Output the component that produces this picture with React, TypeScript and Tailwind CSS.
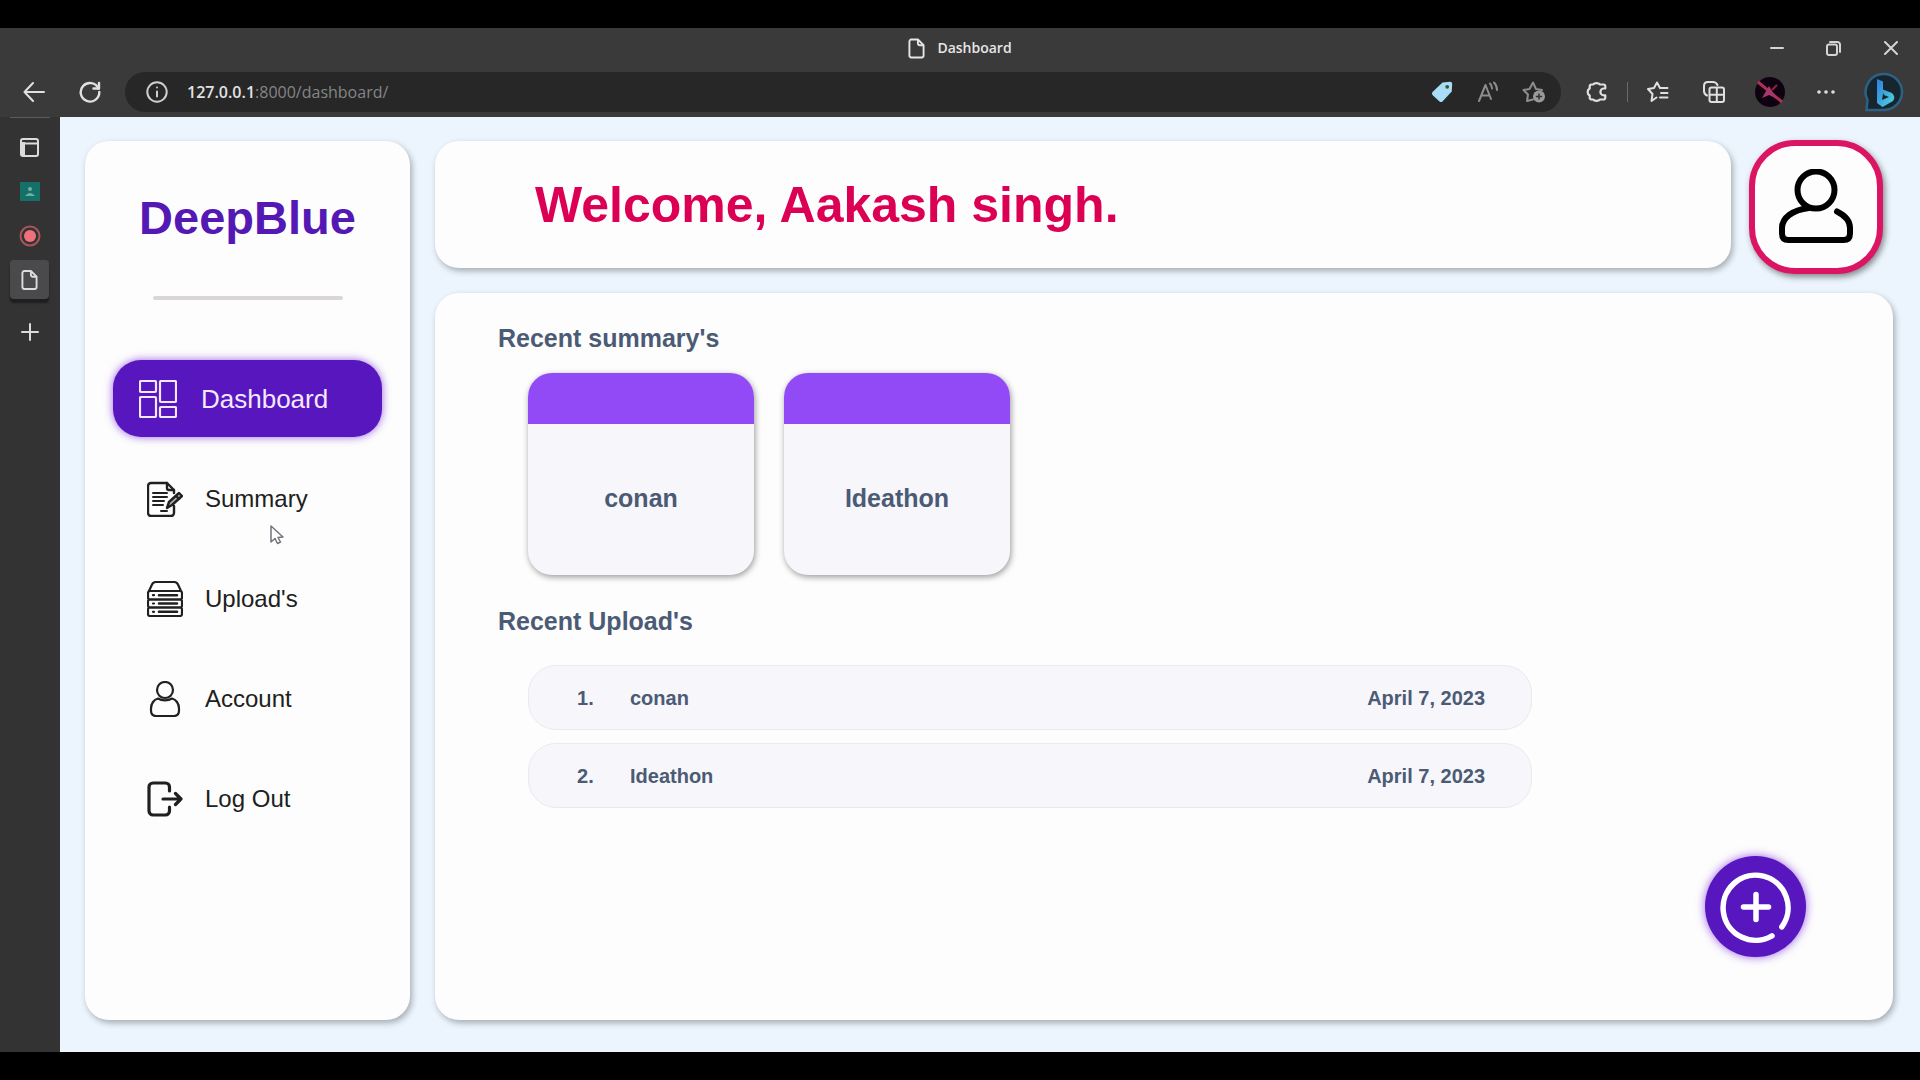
import type { ReactNode } from "react";

type IconProps = { className?: string };

const FileIcon = ({ className }: IconProps) => (
  <svg className={className} viewBox="0 0 18 22" fill="none" stroke="currentColor" strokeWidth="2" strokeLinejoin="round">
    <path d="M3.5 1.5h7l6 6v11a2 2 0 0 1-2 2h-11a2 2 0 0 1-2-2v-15a2 2 0 0 1 2-2z" />
    <path d="M10.5 1.5v4a2 2 0 0 0 2 2h4" />
  </svg>
);

const DashboardIcon = () => (
  <svg className="size-[38px]" viewBox="0 0 38 38" fill="none" stroke="currentColor" strokeWidth="2.200">
    <rect x="1" y="1" width="16" height="11" rx="1" />
    <rect x="21" y="1" width="16" height="21" rx="1" />
    <rect x="1" y="17" width="16" height="20" rx="1" />
    <rect x="21" y="27" width="16" height="10" rx="1" />
  </svg>
);

const SummaryIcon = () => (
  <svg className="size-9" viewBox="0 0 36 36" fill="none" stroke="currentColor" strokeWidth="2.4" strokeLinejoin="round" strokeLinecap="round">
    <path d="M27 12V9l-7-7H4a3 3 0 0 0-3 3v27a3 3 0 0 0 3 3h20a3 3 0 0 0 3-3v-7" />
    <path d="M20 2v5a2 2 0 0 0 2 2h5" />
    <path d="M6 12h14M6 16h14M6 20h11M6 24h10M14 30h6" strokeWidth="2" />
    <path d="m20 27 2-6 10-9 3 3-10 9z" fill="currentColor" fillOpacity=".35" />
    <path d="m29 15 3 3" />
  </svg>
);

const UploadsIcon = () => (
  <svg className="size-9" viewBox="0 0 36 36" fill="none" stroke="currentColor" strokeWidth="2.200" strokeLinejoin="round" strokeLinecap="round">
    <path d="M2 10 5 3.500Q6 1 9 1h18q3 0 4 2.500L34 10" />
    <rect x="1" y="10" width="34" height="8.500" rx="2" />
    <rect x="1" y="18.500" width="34" height="8" rx="2" />
    <rect x="1" y="26.500" width="34" height="8.500" rx="2" />
    <path d="M12 14.200h18M12 22.500h18M12 30.800h18" strokeWidth="2.600" />
    <path d="M6 14.200h1M6 22.500h1M6 30.800h1" />
  </svg>
);

const AccountIcon = () => (
  <svg className="size-9" viewBox="0 0 36 36" fill="none" stroke="currentColor" strokeWidth="2.200">
    <circle cx="18" cy="9" r="8" />
    <path d="M11 17.500c-4 1-7 5-7 10v2c0 3.500 2 5.500 5 5.500h18c3 0 5-2 5-5.500v-2c0-5-3-9-7-10-4 2.600-10 2.600-14 0z" strokeLinejoin="round" />
  </svg>
);

const LogOutIcon = () => (
  <svg className="size-9" viewBox="0 0 36 36" fill="none" stroke="currentColor" strokeWidth="3.200" strokeLinecap="round" strokeLinejoin="round">
    <path d="M22.500 10V6a4 4 0 0 0-4-4H6a4 4 0 0 0-4 4v24a4 4 0 0 0 4 4h12.500a4 4 0 0 0 4-4v-4" />
    <path d="M16 18h18M28.500 12.500 34 18l-5.500 5.500" />
  </svg>
);

const ProfileIcon = () => (
  <svg className="size-[76px]" viewBox="0 0 76 76" fill="none" stroke="currentColor" strokeWidth="6" strokeLinecap="round" strokeLinejoin="round">
    <circle cx="38" cy="21" r="18.500" />
    <path d="M31 39C14 41 4 49 4 59v5.500Q4 71 10.500 71h55q6.500 0 6.500-6.500V59c0-7-5-12.500-13-16.500" />
  </svg>
);

const AddIcon = () => (
  <svg className="size-[72px]" viewBox="0 0 72 72" fill="none" stroke="currentColor" strokeWidth="5.500" strokeLinecap="round">
    <path d="M53 64.200A32.500 32.500 0 1 1 62.500 55" transform="rotate(2 36 36)" />
    <path d="M36 23.500v25M23.500 36h25" />
  </svg>
);

const PointerIcon = () => (
  <svg className="h-5 w-4" viewBox="0 0 16 20" fill="#fff" stroke="#77727c" strokeWidth="1.500" strokeLinejoin="round">
    <path d="M2 1v16l4-3.500 2.500 5 3-1.500-2.500-4.500 5-.5z" />
  </svg>
);

const IconButton = ({ label, children }: { label: string; children: ReactNode }) => (
  <button type="button" aria-label={label} className="flex size-9 shrink-0 items-center justify-center">
    {children}
  </button>
);

const line = { fill: "none", stroke: "currentColor", strokeWidth: 2, strokeLinecap: "round", strokeLinejoin: "round" } as const;

const TitleBar = () => (
  <div className="grid h-10 grid-cols-[1fr_auto_1fr] items-center">
    <div />
    <div className="flex items-center gap-3">
      <FileIcon className="h-[21px] w-[17px]" />
      <h1 className="text-[14px] leading-5 font-semibold">Dashboard</h1>
    </div>
    <div className="flex h-full items-center justify-end pr-px text-[#d4d4d4]">
      <button type="button" aria-label="Minimize" className="flex h-9 w-[57px] items-center justify-center">
        <svg className="size-[14px]" viewBox="0 0 14 14" {...line}><path d="M1 7h12" /></svg>
      </button>
      <button type="button" aria-label="Restore" className="flex h-9 w-[57px] items-center justify-center">
        <svg className="size-[15px]" viewBox="0 0 15 15" {...line}>
          <rect x="1" y="3.500" width="10" height="10.500" rx="2" />
          <path d="M4 1h7.500A2.500 2.500 0 0 1 14 3.500V11" />
        </svg>
      </button>
      <button type="button" aria-label="Close" className="flex h-9 w-[57px] items-center justify-center">
        <svg className="size-[14px]" viewBox="0 0 14 14" {...line}><path d="m1 1 12 12M13 1 1 13" /></svg>
      </button>
    </div>
  </div>
);

const Toolbar = () => (
  <div className="flex h-[49px] items-start pt-1 pr-4 pl-4">
    <div className="flex h-10 items-center gap-5 text-[#e0e0e0]">
      <IconButton label="Back">
        <svg className="h-5 w-[22px]" viewBox="0 0 22 20" {...line}><path d="M21 10H2M10 1 1.500 10l8.500 9" /></svg>
      </IconButton>
      <IconButton label="Refresh">
        <svg className="size-[22px]" viewBox="0 0 22 22" {...line} strokeWidth="2.400">
          <path d="M19.500 7.500A9.300 9.300 0 1 0 20.300 11" />
          <path d="M20 2v5.500h-5.500" />
        </svg>
      </IconButton>
    </div>
    <div className="ml-[17px] flex h-10 flex-1 items-center rounded-full bg-[#272727] pr-[9px] pl-[14px]">
      <IconButton label="Site information">
        <svg className="size-[22px] text-[#cfcfcf]" viewBox="0 0 22 22" {...line}>
          <circle cx="11" cy="11" r="9.700" />
          <path d="M11 10.500v5M11 6.500v.1" />
        </svg>
      </IconButton>
      <button type="button" aria-label="Address" className="ml-3 flex-1 text-left text-[16px] leading-6 text-[#858585]">
        <span className="font-semibold text-[#e2e2e2]">127.0.0.1</span>:8000/dashboard/
      </button>
      <div className="flex gap-[10px] text-[#8d8d8d]">
        <IconButton label="Shopping">
          <svg className="size-[22px]" viewBox="0 0 22 22">
            <path d="M11.500 1.500 19 .8q2.200 0 2.200 2.200l-.5 7.500L11.500 20.500q-1.500 1.200-3 0L1.500 14q-1.200-1.500 0-3z" fill="#a9dcf8" />
            <circle cx="16.200" cy="5.800" r="1.900" fill="#3d5a24" />
          </svg>
        </IconButton>
        <IconButton label="Read aloud">
          <svg className="size-[22px]" viewBox="0 0 22 22" {...line}>
            <path d="m2 20 6.500-16L14 18M4.500 14.500h7.500M13 2.500q2 2 2 5M17 1.500q3 3 3 7.500" />
          </svg>
        </IconButton>
        <IconButton label="Add to favorites">
          <svg className="h-[22px] w-6" viewBox="0 0 24 22" {...line}>
            <path d="M11 18.500 5 20l1-6.500L1.500 9l6-1L11 1.500 14 8l6 1" />
            <circle cx="17" cy="15.500" r="6" fill="#9a9a9a" stroke="none" />
            <path d="M17 13v5M14.500 15.500h5" stroke="#333" strokeWidth="1.500" />
          </svg>
        </IconButton>
      </div>
    </div>
    <div className="ml-[18px] flex h-10 items-center text-[#e0e0e0]">
      <IconButton label="Extensions">
        <svg className="size-[22px]" viewBox="0 0 22 22" {...line} strokeWidth="2.200">
          <path d="M7 3.500a4 2.600 0 0 1 7 0h3.500A1.800 1.800 0 0 1 19.300 5.300v2.200h-1.500a3.400 3.400 0 0 0 0 6.800h1.500v2.400a1.800 1.800 0 0 1-1.800 1.800H14a4 2.600 0 0 1-7 0H5.500a1.800 1.800 0 0 1-1.800-1.800V14.500a4 4 0 0 1 0-7V5.300a1.800 1.800 0 0 1 1.800-1.800z" />
        </svg>
      </IconButton>
      <span className="mx-3 h-5 w-px bg-[#6a6a6a]" />
      <div className="flex items-center gap-5">
        <IconButton label="Favorites">
          <svg className="size-[22px]" viewBox="0 0 22 22" {...line}>
            <path d="M9.500 16.500 4.500 20l1-7L1 8l6-1 3-5.500L13 7h7.500M14 12h6.500M13 16.500h7.500" />
          </svg>
        </IconButton>
        <IconButton label="Collections">
          <svg className="size-[22px]" viewBox="0 0 22 22" {...line}>
            <path d="M4 14.500Q1 13 1 10V5q0-4 4-4h5q3 0 4.500 3" />
            <rect x="6.500" y="6.500" width="14.500" height="14.500" rx="2" />
            <path d="M13.800 7v14M7 13.800h14" />
          </svg>
        </IconButton>
        <IconButton label="Profile">
          <svg className="size-[30px]" viewBox="0 0 30 30">
            <circle cx="15" cy="15" r="15" fill="#0e0210" />
            <path d="M3 5 27 25" stroke="#b52d56" strokeWidth="3" />
            <path d="m7 21 7-12 8 13-8-4z" fill="#a8386a" />
            <path d="m22 8-5 5" stroke="#8d2345" strokeWidth="2" />
          </svg>
        </IconButton>
        <IconButton label="Settings and more">
          <svg className="h-1 w-[18px]" viewBox="0 0 18 4" fill="currentColor"><circle cx="2" cy="2" r="1.800" /><circle cx="9" cy="2" r="1.800" /><circle cx="16" cy="2" r="1.800" /></svg>
        </IconButton>
        <button type="button" aria-label="Bing chat" className="flex size-10 items-center justify-center">
          <svg className="size-10" viewBox="0 0 40 40">
            <defs>
              <linearGradient id="bing" x1="0" y1="0" x2="1" y2="1">
                <stop offset="0" stopColor="#2f7fe0" />
                <stop offset="1" stopColor="#4fd6dc" />
              </linearGradient>
            </defs>
            <path d="M20 2a18 18 0 1 1 0 36H2.500l1-10A18 18 0 0 1 20 2z" fill="#17262e" stroke="#2b6184" strokeWidth="2.500" />
            <path d="M13 7 19 9.500v12L18 28l7-3-5-2-2.500-6L28 21q4 4 1 8l-10.500 6L13 31z" fill="url(#bing)" />
          </svg>
        </button>
      </div>
    </div>
  </div>
);

const TabRail = () => (
  <nav aria-label="Tabs" className="flex w-[60px] shrink-0 flex-col items-center bg-[#333333] pr-px text-[#dcdcdc]">
    <span className="h-px w-10 bg-[#5c5c5c]" />
    <div className="mt-[10px] flex flex-col items-center gap-[5px]">
      <button type="button" aria-label="Tab actions" className="flex size-[39px] items-center justify-center">
        <svg className="size-[19px]" viewBox="0 0 19 19" {...line}>
          <rect x="1" y="1" width="17" height="17" rx="2" />
          <path d="M1 5.500h17" />
          <path d="M1 4h4v14H1z" fill="currentColor" stroke="none" />
        </svg>
      </button>
      <button type="button" aria-label="Classroom" className="flex size-[39px] items-center justify-center">
        <svg className="size-5" viewBox="0 0 20 20">
          <rect width="20" height="19" rx="1" fill="#16706a" />
          <circle cx="10" cy="7" r="2" fill="#6fb0a0" />
          <path d="M5 14q5-6 10 0z" fill="#6fb0a0" />
        </svg>
      </button>
      <button type="button" aria-label="Recorder" className="flex size-[39px] items-center justify-center">
        <svg className="size-[22px]" viewBox="0 0 22 22">
          <circle cx="11" cy="11" r="9.500" fill="none" stroke="#a8555c" strokeWidth="2" />
          <circle cx="11" cy="11" r="6" fill="#f0717a" />
        </svg>
      </button>
      <button type="button" aria-label="Dashboard tab" className="flex size-[39px] items-center justify-center rounded-sm bg-[#4a4a4c] shadow-[0_4px_2px_#1e1e1e]">
        <FileIcon className="h-[22px] w-[17px]" />
      </button>
      <button type="button" aria-label="New tab" className="mt-2 flex size-[39px] items-center justify-center">
        <svg className="size-[18px]" viewBox="0 0 18 18" {...line}><path d="M9 1v16M1 9h16" /></svg>
      </button>
    </div>
  </nav>
);

const navItems = [
  { label: "Summary", icon: <SummaryIcon />, pointer: true },
  { label: "Upload's", icon: <UploadsIcon /> },
  { label: "Account", icon: <AccountIcon /> },
  { label: "Log Out", icon: <LogOutIcon /> },
];

const Sidebar = () => (
  <aside className="flex w-[325px] shrink-0 flex-col rounded-3xl bg-[#fdfdfd] px-7 shadow-[2px_3px_6px_rgba(0,0,0,0.3)]">
    <p className="mt-[49px] text-center text-[47px] leading-[56px] font-bold text-[#5418b4]">DeepBlue</p>
    <hr className="mx-auto mt-[50px] h-1 w-[190px] rounded-full border-0 bg-[#dbd6d6]" />
    <nav aria-label="Main" className="mt-[60px]">
      <a href="#dashboard" aria-current="page" className="flex h-[77px] items-center gap-6 rounded-[28px] bg-[#5716be] pl-[26px] text-[26px] leading-8 text-[#f3e9ff] shadow-[0_0_8px_rgba(112,32,220,0.7)]">
        <DashboardIcon />
        Dashboard
      </a>
      <div className="mt-6 flex flex-col gap-6">
        {navItems.map((item) => (
          <a key={item.label} href={"#" + item.label} className="relative flex h-[76px] items-center gap-[22px] pl-[34px] text-[24px] leading-8 text-[#202020]">
            {item.icon}
            {item.label}
            {item.pointer && (
              <span className="absolute top-[64px] left-[156px]">
                <PointerIcon />
              </span>
            )}
          </a>
        ))}
      </div>
    </nav>
  </aside>
);

const summaries = ["conan", "Ideathon"];
const uploads = [
  { name: "conan", date: "April 7, 2023" },
  { name: "Ideathon", date: "April 7, 2023" },
];

const Content = () => (
  <section className="relative flex-1 rounded-3xl bg-[#fdfdfd] pt-[29px] pr-16 pl-[63px] text-[#4b5b75] shadow-[2px_3px_6px_rgba(0,0,0,0.3)]">
    <h2 className="text-[25px] leading-8 font-bold">Recent summary's</h2>
    <div className="mt-[19px] flex gap-[30px] pl-[30px]">
      {summaries.map((name) => (
        <article key={name} className="w-[226px] overflow-hidden rounded-3xl bg-[#f7f6fb] shadow-[1px_2px_6px_rgba(0,0,0,0.4)]">
          <div className="h-[51px] bg-[#914af6]" />
          <h3 className="flex h-[151px] items-center justify-center pb-1 text-[25px] leading-8 font-bold">{name}</h3>
        </article>
      ))}
    </div>
    <h2 className="mt-[30px] text-[25px] leading-8 font-bold">Recent Upload's</h2>
    <ol className="mt-7 ml-[30px] flex max-w-[1004px] flex-col gap-[13px] text-[20px] leading-6 font-bold">
      {uploads.map((u, i) => (
        <li key={u.name} className="flex h-[65px] items-center rounded-[28px] border border-[#ebe9f0] bg-[#f7f6fb] pr-[46px] pl-12">
          <span className="w-[53px]">{i + 1}.</span>
          <span className="flex-1">{u.name}</span>
          <time dateTime="2023-04-07">{u.date}</time>
        </li>
      ))}
    </ol>
    <button type="button" aria-label="Add" className="absolute right-[87px] bottom-[63px] flex size-[101px] items-center justify-center rounded-full bg-[#5716be] text-white shadow-[0_0_10px_rgba(112,32,220,0.7)]">
      <AddIcon />
    </button>
  </section>
);

export default function App() {
  return (
    <div className="flex min-h-screen flex-col bg-black py-7 font-['Liberation_Sans',Arial,sans-serif]">
      <header className="bg-[#3a3a3a] font-['Open_Sans','Noto_Sans',sans-serif] text-[#e6e6e6]">
        <TitleBar />
        <Toolbar />
      </header>
      <div className="flex flex-1">
        <TabRail />
        <main className="flex flex-1 gap-[25px] bg-[#ecf5fd] pt-6 pr-[27px] pb-8 pl-[25px]">
          <Sidebar />
          <div className="flex flex-1 flex-col gap-[25px]">
            <div className="flex h-[127px] items-center gap-[18px] pr-[10px]">
              <div className="flex h-full flex-1 items-center rounded-3xl bg-[#fdfdfd] pl-[100px] shadow-[2px_3px_6px_rgba(0,0,0,0.3)]">
                <p className="text-[50px] leading-[60px] font-bold text-[#dc0055]">Welcome, Aakash singh.</p>
              </div>
              <button type="button" aria-label="My profile" className="mt-1 flex size-[134px] shrink-0 items-center justify-center rounded-[46px] border-[6px] border-[#dc1464] bg-[#fdfdfd] text-black shadow-[2px_3px_6px_rgba(0,0,0,0.45)]">
                <ProfileIcon />
              </button>
            </div>
            <Content />
          </div>
        </main>
      </div>
    </div>
  );
}
